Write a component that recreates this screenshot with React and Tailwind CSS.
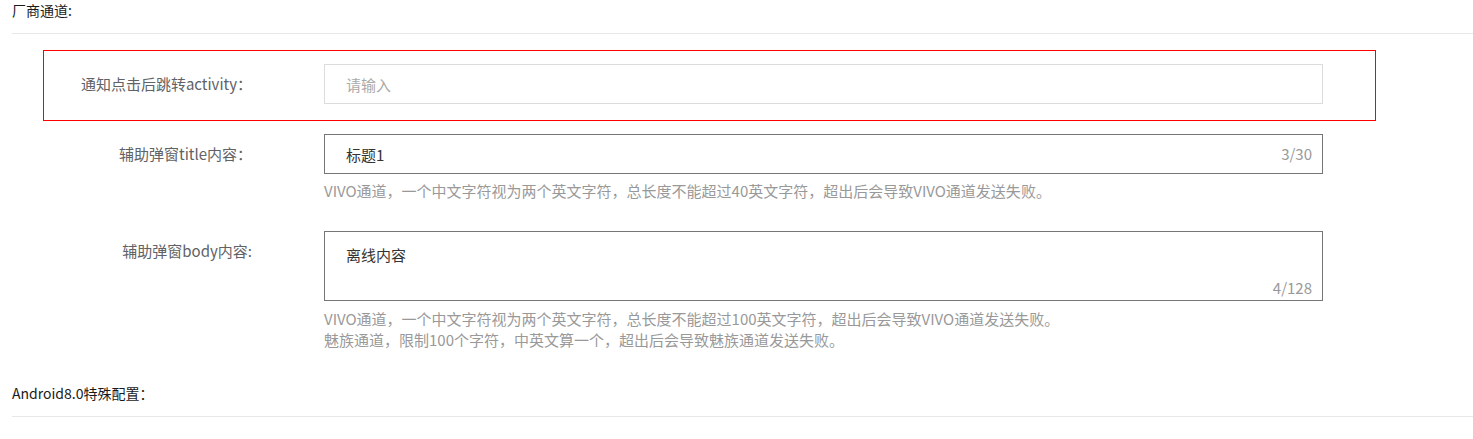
export default function App() {
  return (
    <div className="min-h-[439px] w-full bg-white pl-[12px] font-['Noto_Sans_CJK_SC',sans-serif] text-[15px]">
      <div className="h-[34px] border-b border-[#e8e8e8] text-[14px] leading-[20px] text-[#1a1a1a]">
        厂商通道:
      </div>

      <div className="mt-[16px] ml-[31px] flex w-[1333px] items-center border border-[#ff0000] pt-[13px] pb-[16px]">
        <label className="w-[208px] text-right leading-[40px] text-[#606266]">
          通知点击后跳转activity：
        </label>
        <div className="ml-[72px] h-[40px] w-[999px] border border-[#dcdcdc]">
          <input
            className="h-full w-full bg-transparent pl-[21px] text-[#333] outline-none placeholder:text-[#aaaaaa]"
            placeholder="请输入"
            readOnly
          />
        </div>
      </div>

      <div className="mt-[13px] ml-[32px] flex items-start">
        <label className="w-[208px] text-right leading-[40px] text-[#606266]">
          辅助弹窗title内容：
        </label>
        <div className="ml-[72px] w-[999px]">
          <div className="relative h-[40px] border border-[#767676]">
            <input
              className="h-full w-full bg-transparent pl-[21px] pr-[60px] text-[#333] outline-none"
              value="标题1"
              readOnly
            />
            <span className="absolute top-0 right-[10px] leading-[38px] text-[#999]">3/30</span>
          </div>
          <div className="mt-[6px] leading-[21px] text-[#999]">
            VIVO通道，一个中文字符视为两个英文字符，总长度不能超过40英文字符，超出后会导致VIVO通道发送失败。
          </div>
        </div>
      </div>

      <div className="mt-[30px] ml-[32px] flex items-start">
        <label className="w-[208px] text-right leading-[40px] text-[#606266]">
          辅助弹窗body内容:
        </label>
        <div className="ml-[72px] w-[999px]">
          <div className="relative h-[70px] border border-[#767676]">
            <textarea
              className="block h-full w-full resize-none bg-transparent pt-[12px] pl-[21px] pr-[60px] leading-[21px] text-[#333] outline-none"
              value="离线内容"
              readOnly
            />
            <span className="absolute right-[10px] bottom-[2px] leading-[21px] text-[#999]">4/128</span>
          </div>
          <div className="mt-[7px] leading-[21px] text-[#999]">
            <div>VIVO通道，一个中文字符视为两个英文字符，总长度不能超过100英文字符，超出后会导致VIVO通道发送失败。</div>
            <div>魅族通道，限制100个字符，中英文算一个，超出后会导致魅族通道发送失败。</div>
          </div>
        </div>
      </div>

      <div className="mt-[33px] h-[34px] border-b border-[#e8e8e8] text-[14px] leading-[20px] text-[#1a1a1a]">
        Android8.0特殊配置：
      </div>
    </div>
  );
}
